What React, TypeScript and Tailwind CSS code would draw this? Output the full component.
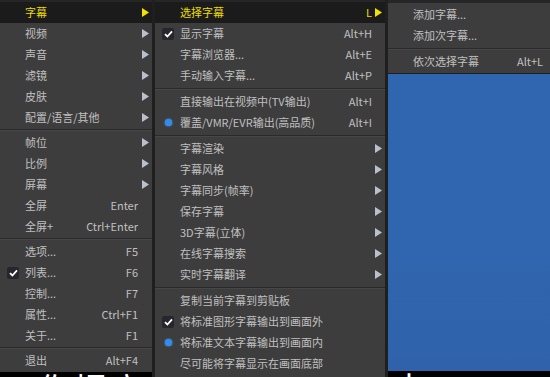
type Item =
    | { sep: true }
    | { sep?: false; label: string; shortcut?: string; arrow?: boolean; mark?: 'check' | 'radio'; active?: boolean };

const leftItems: Item[] = [
    { label: '字幕', arrow: true, active: true },
    { label: '视频', arrow: true },
    { label: '声音', arrow: true },
    { label: '滤镜', arrow: true },
    { label: '皮肤', arrow: true },
    { label: '配置/语言/其他', arrow: true },
    { sep: true },
    { label: '帧位', arrow: true },
    { label: '比例', arrow: true },
    { label: '屏幕', arrow: true },
    { label: '全屏', shortcut: 'Enter' },
    { label: '全屏+', shortcut: 'Ctrl+Enter' },
    { sep: true },
    { label: '选项...', shortcut: 'F5' },
    { label: '列表...', shortcut: 'F6', mark: 'check' },
    { label: '控制...', shortcut: 'F7' },
    { label: '属性...', shortcut: 'Ctrl+F1' },
    { label: '关于...', shortcut: 'F1' },
    { sep: true },
    { label: '退出', shortcut: 'Alt+F4' },
];

const subtitleItems: Item[] = [
    { label: '选择字幕', shortcut: 'L', arrow: true, active: true },
    { label: '显示字幕', shortcut: 'Alt+H', mark: 'check' },
    { label: '字幕浏览器...', shortcut: 'Alt+E' },
    { label: '手动输入字幕...', shortcut: 'Alt+P' },
    { sep: true },
    { label: '直接输出在视频中(TV输出)', shortcut: 'Alt+I' },
    { label: '覆盖/VMR/EVR输出(高品质)', shortcut: 'Alt+I', mark: 'radio' },
    { sep: true },
    { label: '字幕渲染', arrow: true },
    { label: '字幕风格', arrow: true },
    { label: '字幕同步(帧率)', arrow: true },
    { label: '保存字幕', arrow: true },
    { label: '3D字幕(立体)', arrow: true },
    { label: '在线字幕搜索', arrow: true },
    { label: '实时字幕翻译', arrow: true },
    { sep: true },
    { label: '复制当前字幕到剪贴板' },
    { label: '将标准图形字幕输出到画面外', mark: 'check' },
    { label: '将标准文本字幕输出到画面内', mark: 'radio' },
    { label: '尽可能将字幕显示在画面底部' },
];

const selectItems: Item[] = [
    { label: '添加字幕...' },
    { label: '添加次字幕...' },
    { sep: true },
    { label: '依次选择字幕', shortcut: 'Alt+L' },
];

function Arrow({ active }: { active?: boolean }) {
    return (
        <svg width="7" height="9" viewBox="0 0 7 9">
            <polygon points="0,0 7,4.5 0,9" fill={active ? '#f2e200' : '#b9c0cc'} />
        </svg>
    );
}

function Mark({ kind }: { kind: 'check' | 'radio' }) {
    if (kind === 'radio') {
        return <span className="block w-[7px] h-[7px] rounded-full bg-[#2f8cf2] shadow-[0_0_2px_#5aa8ff]" />;
    }
    return (
        <span className="flex items-center justify-center w-[12px] h-[12px] rounded-[2px] bg-[#26262e]">
            <svg width="9" height="8" viewBox="0 0 9 8">
                <path d="M1 4.2 L3.4 6.5 L8 1.4" stroke="#ffffff" strokeWidth="1.8" fill="none" />
            </svg>
        </span>
    );
}

// sepClass lets the main menu use slightly tighter dividers than the submenus
function Menu({ items, arrowCol, sepClass = 'h-[5px]' }: { items: Item[]; arrowCol: string; sepClass?: string }) {
    return (
        <div className="flex flex-col">
            {items.map((item, i) =>
                item.sep ? (
                    <div key={i} className={`${sepClass} flex flex-col justify-center`}>
                        <div className="h-px bg-[#2a2a2a]" />
                        <div className="h-px bg-[#474747]" />
                    </div>
                ) : (
                    <div
                        key={i}
                        className={`h-[21px] flex items-center ${item.active ? 'bg-[#1b1b1b] text-[#ecdc00]' : 'text-[#c0c0c0]'}`}
                    >
                        <div className="w-[25px] shrink-0 flex justify-center pl-[1px]">
                            {item.mark && <Mark kind={item.mark} />}
                        </div>
                        <div className="flex-1 whitespace-nowrap">{item.label}</div>
                        {item.shortcut && <div className="whitespace-nowrap">{item.shortcut}</div>}
                        <div className={`${arrowCol} shrink-0 flex justify-center`}>
                            {item.arrow && <Arrow active={item.active} />}
                        </div>
                    </div>
                ),
            )}
        </div>
    );
}

export default function App() {
    return (
        <div className="w-[550px] h-[377px] overflow-hidden flex bg-[#141414] text-[11px] leading-none font-['Noto_Sans_CJK_SC',sans-serif]">
            <div className="w-[155px] shrink-0 flex flex-col border-r-[3px] border-[#1f1f1f]">
                <div className="h-[2px] bg-[#262626]" />
                <div className="bg-[#3d3d3d] pb-px">
                    <Menu items={leftItems} arrowCol="w-[14px]" sepClass="h-[4px]" />
                </div>
                <div className="flex-1 bg-black overflow-hidden pl-[38px] text-white text-[34px] leading-[34px] tracking-[2px]">
                    你提高城
                </div>
            </div>

            <div className="w-[233px] shrink-0 flex flex-col border-r-[3px] border-[#1f1f1f] bg-[#3d3d3d]">
                <div className="h-[2px] bg-[#262626]" />
                <Menu items={subtitleItems} arrowCol="w-[13px]" />
            </div>

            <div className="flex-1 flex flex-col">
                <div className="h-[3px] bg-[#262626]" />
                <div className="bg-[#3d3d3d] py-[1px]">
                    <Menu items={selectItems} arrowCol="w-[7px]" />
                </div>
                <div className="h-px bg-[#1f1f1f]" />
                <div className="h-[297px] bg-[linear-gradient(to_bottom,#3066af_0%,#3066af_60%,#2f62aa_100%)]" />
                <div className="flex-1 bg-black overflow-hidden pl-[4px] text-white text-[34px] leading-[34px]">
                    山
                </div>
            </div>
        </div>
    );
}
